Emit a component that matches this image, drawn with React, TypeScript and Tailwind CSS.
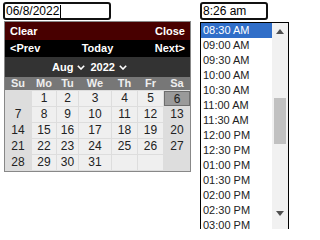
import React from "react";

const weekDays = ["Su", "Mo", "Tu", "We", "Th", "Fr", "Sa"];

const weeks: (number | null)[][] = [
  [null, 1, 2, 3, 4, 5, 6],
  [7, 8, 9, 10, 11, 12, 13],
  [14, 15, 16, 17, 18, 19, 20],
  [21, 22, 23, 24, 25, 26, 27],
  [28, 29, 30, 31, null, null, null],
];

const times = [
  "08:30 AM",
  "09:00 AM",
  "09:30 AM",
  "10:00 AM",
  "10:30 AM",
  "11:00 AM",
  "11:30 AM",
  "12:00 PM",
  "12:30 PM",
  "01:00 PM",
  "01:30 PM",
  "02:00 PM",
  "02:30 PM",
  "03:00 PM",
];

function Chevron() {
  return (
    <svg width="8" height="5" viewBox="0 0 8 5" className="ml-[4px] mt-[1px]">
      <polyline points="0.8,0.8 4,4 7.2,0.8" fill="none" stroke="white" strokeWidth="1.6" />
    </svg>
  );
}

function Calendar() {
  return (
    <div className="ml-[1px] mt-[1px] w-[187px] border border-[#888] text-[11px]">
      <div className="flex h-[18px] items-center justify-between bg-[#480000] px-[5px] font-bold text-white">
        <span>Clear</span>
        <span>Close</span>
      </div>
      <div className="flex h-[17px] items-center justify-between bg-black px-[5px] font-bold text-white">
        <span>&lt;Prev</span>
        <span>Today</span>
        <span>Next&gt;</span>
      </div>
      <div className="flex h-[20px] items-center bg-[#333] pl-[47px] font-bold text-white">
        <span className="flex items-center">
          Aug
          <Chevron />
        </span>
        <span className="ml-[5px] flex items-center">
          2022
          <Chevron />
        </span>
      </div>
      <div className="grid h-[13px] grid-cols-[26px_24px_21px_32px_25px_25px_26px] gap-x-[1px] bg-[#777] font-bold leading-[13px] text-[#eee]">
        {weekDays.map((d) => (
          <span key={d} className="text-center">
            {d}
          </span>
        ))}
      </div>
      <div className="grid grid-cols-[26px_24px_21px_32px_25px_25px_26px] gap-[1px] bg-[#ddd] py-[1px] text-[12px] text-[#222]">
        {weeks.map((week, wi) =>
          week.map((day, di) => {
            const weekday = di > 0 && di < 6;
            const today = day === 6;
            let cls = "h-[15px] text-center leading-[15px]";
            if (today) cls += " border border-[#6e6e6e] bg-[#9a9a9a] leading-[13px]";
            else if (weekday && !(wi === 0 && day === null)) cls += " bg-[#efefef]";
            return (
              <span key={wi + "-" + di} className={cls}>
                {day ?? ""}
              </span>
            );
          })
        )}
      </div>
    </div>
  );
}

function TimeList() {
  return (
    <div className="mt-[2px] flex w-[89px] border border-black bg-white text-[11px]">
      <div className="flex w-[71px] flex-col">
        {times.map((t, i) => (
          <div
            key={t}
            className={
              i === 0
                ? "h-[15px] bg-[#306ec8] pl-[2px] leading-[15px] text-white"
                : "h-[15px] pl-[2px] leading-[15px] text-[#222]"
            }
          >
            {t}
          </div>
        ))}
      </div>
      <div className="flex w-[16px] flex-col bg-[#f1f1f1]">
        <div className="flex h-[16px] items-center justify-center">
          <svg width="8" height="5" viewBox="0 0 8 5">
            <polygon points="0,5 4,0 8,5" fill="#505050" />
          </svg>
        </div>
        <div className="mx-[2px] mt-[59px] h-[46px] bg-[#c1c1c1]" />
        <div className="mt-[61px] flex h-[16px] items-center justify-center">
          <svg width="8" height="5" viewBox="0 0 8 5">
            <polygon points="0,0 8,0 4,5" fill="#505050" />
          </svg>
        </div>
        <div className="h-[40px]" />
      </div>
    </div>
  );
}

export default function App() {
  return (
    <div className="flex h-[229px] w-[292px] items-start overflow-hidden bg-white pl-[3px] pt-[2px] font-['Liberation_Sans',Arial,sans-serif]">
      <div className="flex w-[189px] flex-col">
        <div className="flex h-[18px] w-[108px] items-center rounded-[3px] border-2 border-[#111] pl-[1px] text-[12px] text-black">
          06/8/2022
          <span className="ml-[1px] h-[13px] w-[1px] bg-black" />
        </div>
        <Calendar />
      </div>
      <div className="ml-[8px] flex w-[89px] flex-col">
        <div className="flex h-[18px] w-[68px] items-center rounded-[3px] border-2 border-[#111] pl-[1px] text-[12px] text-black">
          8:26 am
        </div>
        <TimeList />
      </div>
    </div>
  );
}
